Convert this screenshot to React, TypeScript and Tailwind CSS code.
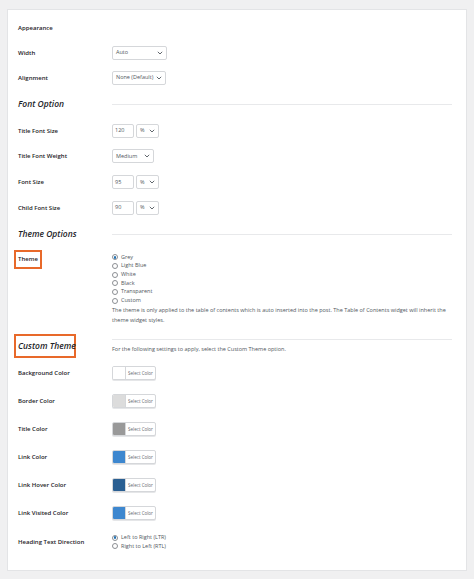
import React from "react";

const font = { fontFamily: '"Open Sans", "Noto Sans", sans-serif' };

const Chevron = () => (
  <svg width="6" height="4" viewBox="0 0 6 4" className="shrink-0">
    <path d="M0.8 0.8 L3 3 L5.2 0.8" fill="none" stroke="#50575e" strokeWidth="0.9" />
  </svg>
);

const Select = ({ value, w }: { value: string; w: string }) => (
  <div
    className={`${w} h-[14px] flex items-center justify-between pl-[3px] pr-[3px] border border-[#d5d7da] rounded-[2px] bg-white text-[5.5px] text-[#50575e]`}
  >
    <span className="whitespace-nowrap">{value}</span>
    <Chevron />
  </div>
);

const SizeInput = ({ value }: { value: string }) => (
  <div className="flex items-center gap-[2px]">
    <div className="w-[22px] h-[14px] flex items-center pl-[2px] border border-[#d5d7da] rounded-[2px] bg-white text-[5.5px] text-[#50575e]">
      {value}
    </div>
    <Select value="%" w="w-[23px]" />
  </div>
);

const Label = ({ children }: { children: React.ReactNode }) => (
  <div className="w-[94px] shrink-0 text-[6px] font-semibold text-[#1d2327] leading-none whitespace-nowrap">{children}</div>
);

const Heading = ({ title }: { title: string }) => (
  <div className="flex items-center h-[28px]">
    <div className="w-[94px] shrink-0 text-[8.5px] font-semibold italic text-[#1d2327] whitespace-nowrap">{title}</div>
    <div className="flex-1 h-px bg-[#e8e9eb] mr-[14px]" />
  </div>
);

const Radio = ({ label, checked }: { label: string; checked?: boolean }) => (
  <div className="flex items-center h-[8.7px] gap-[3px]">
    <span className="w-[6px] h-[6px] rounded-full border border-[#8c8f94] bg-white flex items-center justify-center">
      {checked && <span className="w-[2.5px] h-[2.5px] rounded-full bg-[#2271b1]" />}
    </span>
    <span className="text-[5.5px] text-[#50575e] leading-none">{label}</span>
  </div>
);

const ColorPick = ({ color }: { color: string }) => (
  <div className="w-[44px] h-[14px] flex border border-[#d5d7da] rounded-[2px] bg-white shadow-[0_1px_0_#e5e6e8] overflow-hidden">
    <div className="w-[13px] h-full border-r border-[#d5d7da]" style={{ background: color }} />
    <div className="flex-1 flex items-center justify-center text-[4.5px] text-[#646970]">Select Color</div>
  </div>
);

const colors = [
  { label: "Background Color", color: "#ffffff" },
  { label: "Border Color", color: "#dcdcdc" },
  { label: "Title Color", color: "#999999" },
  { label: "Link Color", color: "#3d87cf" },
  { label: "Link Hover Color", color: "#2a5f92" },
  { label: "Link Visited Color", color: "#3d87cf" },
];

export default function App() {
  return (
    <div className="w-[474px] h-[579px] bg-[#f0f0f1] pt-[9px] pl-[7px]" style={font}>
      <div className="w-[460px] h-[562px] bg-white border border-[#e3e4e6] pl-[10px] pt-[6px]">
        <div className="flex items-center h-[24px]">
          <Label>Appearance</Label>
        </div>
        <div className="flex items-center h-[25px]">
          <Label>Width</Label>
          <Select value="Auto" w="w-[55px]" />
        </div>
        <div className="flex items-center h-[25px]">
          <Label>Alignment</Label>
          <Select value="None (Default)" w="w-[54px]" />
        </div>

        <Heading title="Font Option" />
        <div className="flex items-center h-[25px]">
          <Label>Title Font Size</Label>
          <SizeInput value="120" />
        </div>
        <div className="flex items-center h-[26px]">
          <Label>Title Font Weight</Label>
          <Select value="Medium" w="w-[42px]" />
        </div>
        <div className="flex items-center h-[26px]">
          <Label>Font Size</Label>
          <SizeInput value="95" />
        </div>
        <div className="flex items-center h-[25px]">
          <Label>Child Font Size</Label>
          <SizeInput value="90" />
        </div>

        <Heading title="Theme Options" />
        <div className="flex h-[80px]">
          <div className="w-[94px] shrink-0 pt-[2px]">
            <div className="ml-[-4px] w-[28px] h-[19px] border-2 border-[#e8692a] flex items-center pl-[2px] text-[6px] font-semibold text-[#1d2327]">
              Theme
            </div>
          </div>
          <div className="flex-1 pt-[5px] pr-[10px]">
            <Radio label="Grey" checked />
            <Radio label="Light Blue" />
            <Radio label="White" />
            <Radio label="Black" />
            <Radio label="Transparent" />
            <Radio label="Custom" />
            <p className="text-[5.5px] leading-[10px] text-[#50575e]">
              The theme is only applied to the table of contents which is auto inserted into the post. The Table of Contents widget will inherit the theme widget styles.
            </p>
          </div>
        </div>

        <div className="flex h-[31px]">
          <div className="w-[94px] shrink-0 pt-[6px]">
            <div className="ml-[-4px] w-[62px] h-[24px] border-2 border-[#e8692a] flex items-center pl-[2px] text-[8.5px] font-semibold italic text-[#1d2327] whitespace-nowrap">
              Custom Theme
            </div>
          </div>
          <div className="flex-1 pt-[11px] pr-[14px]">
            <div className="h-px bg-[#e8e9eb]" />
            <p className="mt-[4px] text-[5.5px] leading-[10px] text-[#50575e]">
              For the following settings to apply, select the Custom Theme option.
            </p>
          </div>
        </div>

        {colors.map((c) => (
          <div key={c.label} className="flex items-center h-[28px]">
            <Label>{c.label}</Label>
            <ColorPick color={c.color} />
          </div>
        ))}

        <div className="flex items-center h-[30px]">
          <Label>Heading Text Direction</Label>
          <div className="flex flex-col">
            <Radio label="Left to Right (LTR)" checked />
            <Radio label="Right to Left (RTL)" />
          </div>
        </div>
      </div>
    </div>
  );
}
